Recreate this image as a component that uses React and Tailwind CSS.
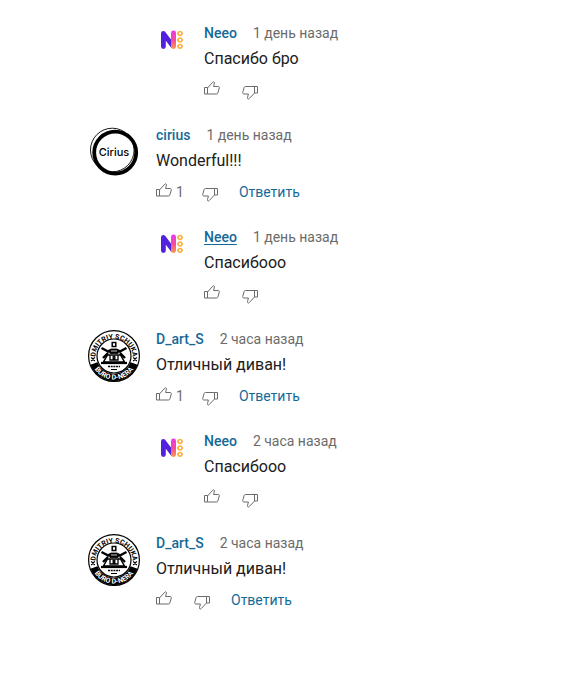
import React from 'react';

const comments = [
  { author: 'Neeo', avatar: 'neeo', time: '1 день назад', text: 'Спасибо бро', reply: true },
  { author: 'cirius', avatar: 'cirius', time: '1 день назад', text: 'Wonderful!!!', likes: 1 },
  { author: 'Neeo', avatar: 'neeo', time: '1 день назад', text: 'Спасибооо', reply: true, underlined: true },
  { author: 'D_art_S', avatar: 'dart', time: '2 часа назад', text: 'Отличный диван!', likes: 1 },
  { author: 'Neeo', avatar: 'neeo', time: '2 часа назад', text: 'Спасибооо', reply: true },
  { author: 'D_art_S', avatar: 'dart', time: '2 часа назад', text: 'Отличный диван!' },
];

const ThumbUp = () => (
  <svg width="16" height="14" viewBox="0 0 16 14" fill="none" stroke="currentColor" strokeLinejoin="round" aria-hidden="true">
    <path d="M0.5 6.5h3v6.5h-3z" />
    <path d="M3.5 7L8.8 1.1c0.6-0.7 1.9-0.2 1.6 0.9L9.6 5.5h4.4c1 0 1.5 0.7 1.3 1.5l-1.4 4.9c-0.2 0.7-0.6 1.1-1.4 1.1h-9" />
  </svg>
);

const ThumbDown = () => (
  <svg width="16" height="14" viewBox="0 0 16 14" fill="none" stroke="currentColor" strokeLinejoin="round" aria-hidden="true">
    <path d="M12.5 0.5h3v6.5h-3z" />
    <path d="M12.5 0.5h-9c-0.8 0-1.2 0.4-1.4 1.1L0.7 6.5c-0.2 0.9 0.3 1.5 1.3 1.5h4.4l-0.9 3.5c-0.3 1.5 0.9 2 1.7 1.1L12.5 7" />
  </svg>
);

const NeeoLogo = () => (
  <svg width="24" height="24" viewBox="0 0 24 24" fill="none" aria-hidden="true">
    <defs>
      <linearGradient id="neeo-stem" x1="0" y1="0" x2="0" y2="1">
        <stop offset="0" stopColor="#e83af2" />
        <stop offset="0.5" stopColor="#f64a9c" />
        <stop offset="1" stopColor="#ff9a4a" />
      </linearGradient>
    </defs>
    <path d="M3.4 18.5V5.5L12.5 17.5" stroke="#5420e0" strokeWidth="4.8" strokeLinecap="round" strokeLinejoin="round" />
    <rect x="11" y="2.5" width="5" height="18.5" rx="2.4" fill="url(#neeo-stem)" />
    <g stroke="#fcb040" strokeWidth="1.5">
      <circle cx="20" cy="5.5" r="1.9" />
      <circle cx="20" cy="12" r="1.9" />
      <circle cx="20" cy="18.3" r="1.9" />
      <path d="M17 5.5h1M17 12h1M17 18.3h1M22 5.5h1M22 12h1M22 18.3h1" />
    </g>
  </svg>
);

const CiriusLogo = () => (
  <svg width="52" height="52" viewBox="0 0 52 52" fill="none" stroke="#000" aria-hidden="true">
    <circle cx="24.3" cy="24" r="21.8" strokeWidth="0.9" />
    <circle cx="27.2" cy="26.6" r="21" strokeWidth="3.8" />
    <text x="26" y="30" textAnchor="middle" fontSize="11" fontWeight="500" fill="#000" stroke="none" className="font-['Inter',sans-serif]">
      Cirius
    </text>
  </svg>
);

const DartLogo = ({ id }) => (
  <svg width="52" height="52" viewBox="0 0 52 52" fill="none" stroke="#000" aria-hidden="true">
    <defs>
      <path id={`${id}-top`} d="M8 32.6A18.7 18.7 0 1 1 44 32.6" />
      <path id={`${id}-bottom`} d="M2.4 26A23.6 23.6 0 0 0 49.6 26" />
    </defs>
    <circle cx="26" cy="26" r="25.4" strokeWidth="1.2" />
    <circle cx="26" cy="26" r="17" strokeWidth="1.2" />
    <path d="M5.9 33.4A21.4 21.4 0 0 0 46.1 33.4" strokeWidth="7.4" />
    <g fill="#000" stroke="none" fontSize="7" fontWeight="700" className="font-['Roboto',sans-serif]">
      <text textAnchor="middle">
        <textPath href={`#${id}-top`} startOffset="50%">DMITRIY SCHUKA</textPath>
      </text>
      <text textAnchor="middle" fill="#fff">
        <textPath href={`#${id}-bottom`} startOffset="50%">BURO D-NERA</textPath>
      </text>
    </g>
    <path d="M3.2 27.4l3.6 3.6M6.8 27.4l-3.6 3.6M45.2 27.4l3.6 3.6M48.8 27.4l-3.6 3.6" strokeWidth="1.3" />
    <path d="M24.2 12.5h3.6v4h-3.6z" strokeWidth="1.5" />
    <path d="M13.5 18l7.5 4M38.5 18l-7.5 4M15 28l5-5M37 28l-5-5" strokeWidth="2.4" />
    <path d="M20 20.5l3-1.5h6l3 1.5-2 3h-8z" fill="#000" strokeWidth="0.8" />
    <path d="M23 21h6" stroke="#fff" strokeWidth="0.8" />
    <path d="M19.5 25h13l4 7h-21z" strokeWidth="1.5" />
    <path d="M22 25v5h8v-5M25.2 26.5h1.6v2.2h-1.6z" strokeWidth="1.3" />
    <path d="M13 33h26" strokeWidth="2.2" />
    <path d="M20 36.5h12" strokeWidth="1.5" strokeDasharray="2 0.7" />
    <path d="M23 39.5h6" strokeWidth="1" />
  </svg>
);

const Avatar = ({ kind, id }) => {
  if (kind === 'neeo') return <NeeoLogo />;
  if (kind === 'cirius') return <CiriusLogo />;
  return <DartLogo id={id} />;
};

const Comment = ({ comment, id }) => {
  const { author, avatar, time, text, likes, reply, underlined } = comment;

  return (
    <article className={`flex h-[102px] ${reply ? 'pl-40' : 'pl-[88px]'}`}>
      <a href="#" aria-label={author} className={`shrink-0 ${reply ? 'mr-5 pt-1' : 'mr-4'}`}>
        <Avatar kind={avatar} id={id} />
      </a>
      <div className="min-w-0 flex-1 pt-px">
        <header className="flex items-center gap-4 text-[14px] leading-4">
          <a href="#" className={`font-medium text-[#146a97] hover:underline ${underlined ? 'underline underline-offset-2' : ''}`}>
            {author}
          </a>
          <time className="text-[#6b6b6b]">{time}</time>
        </header>
        <p className="mt-1.5 text-[16px] leading-6 text-[#202020]">{text}</p>
        <div className="mt-2 flex h-[22px] items-center text-[14px] leading-5 text-[#6b6b6b]">
          <button type="button" aria-label="Нравится" className="mr-1 -mt-1">
            <ThumbUp />
          </button>
          {likes && <span>{likes}</span>}
          <button type="button" aria-label="Не нравится" className="mt-1.5 ml-[18px]">
            <ThumbDown />
          </button>
          {!reply && (
            <button type="button" className="ml-[21px] text-[#146a97]">
              Ответить
            </button>
          )}
        </div>
      </div>
    </article>
  );
};

const App = () => {
  return (
    <main className="min-h-screen bg-white pt-6 font-['Roboto',sans-serif]">
      {comments.map((comment, index) => (
        <Comment key={index} comment={comment} id={`comment-${index}`} />
      ))}
    </main>
  );
};

export default App;
